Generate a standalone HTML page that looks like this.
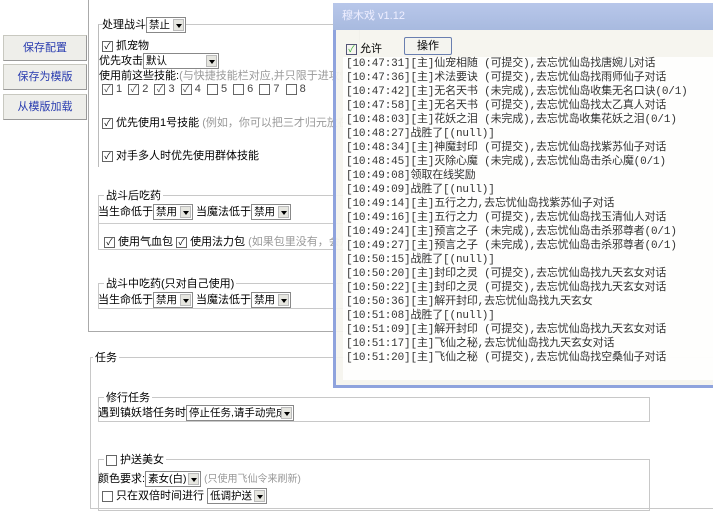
<!DOCTYPE html><html><head><meta charset="utf-8"><style>
body{margin:0;width:713px;height:499px;background:#fff;position:relative;overflow:hidden;font:11px "Liberation Sans","Noto Sans CJK SC",sans-serif;color:#000}
.a{position:absolute;white-space:nowrap}
.btn{position:absolute;left:3px;width:82px;height:24px;background:#eeeeea;border:1px solid #c8c8c0;border-right-color:#999;border-bottom-color:#999;color:#2a3db0;text-align:center;line-height:24px;font-size:11px}
.fs{position:absolute;border:1px solid #c8c8c8}
.sel{display:inline-block;border:1px solid #888;background:#fff;height:14px;line-height:14px;vertical-align:middle;padding-left:2px;position:relative;font-size:10.5px;overflow:hidden}
.sel i{position:absolute;right:1px;top:1px;width:11px;height:12px;background:#e6e6e0;border:1px solid #bbb;box-sizing:border-box}
.sel i:after{content:"";position:absolute;left:2px;top:4px;border:3px solid transparent;border-top:4px solid #000}
.cb{display:inline-block;width:9px;height:9px;border:1px solid #666;vertical-align:middle;margin-right:3px;font-size:9px;line-height:8px;text-align:center}
.g{color:#999}
.win{position:absolute;left:333px;top:3px;width:390px;height:382px;border:3px solid #8fa3dd;border-top:none;background:rgba(245,244,238,0.93)}
.tb{position:absolute;left:-3px;top:0;width:396px;height:27px;background:linear-gradient(#b8c7ea,#a8badf);color:#eef;font-size:11px;line-height:27px;padding-left:9px;box-sizing:border-box}
.log{position:absolute;left:7px;top:54px;width:390px;height:323px;background:rgba(255,255,255,0.85);font:11px "Liberation Mono","Noto Sans CJK SC",monospace;line-height:14px;color:#333;padding-left:3px;box-sizing:border-box;letter-spacing:-0.15px}
</style></head><body>
<div class="a" style="left:88px;top:0;width:1px;height:332px;background:#aaa"></div>
<div class="a" style="left:88px;top:331px;width:260px;height:1px;background:#aaa"></div>
<div class="btn" style="top:35px">保存配置</div>
<div class="btn" style="top:64px">保存为模版</div>
<div class="btn" style="top:94px">从模版加载</div>

<div class="fs" style="left:98px;top:24px;width:260px;height:142px;border-bottom:none;border-left:1px solid #bbb"></div>
<div class="a" style="left:102px;top:16px;background:#fff">处理战斗<span class="sel" style="width:36px">禁止<i></i></span></div>
<div class="a" style="left:102px;top:37px"><span class="cb">✓</span>抓宠物</div>
<div class="a" style="left:99px;top:52px">优先攻击<span class="sel" style="width:72px">默认<i></i></span></div>
<div class="a" style="left:99px;top:67px">使用前这些技能:<span class="g">(与快捷技能栏对应,并只限于进攻性技</span></div>
<div class="a" style="left:102px;top:83px;color:#444"><span class="cb">✓</span>1 &nbsp;<span class="cb">✓</span>2 &nbsp;<span class="cb">✓</span>3 &nbsp;<span class="cb">✓</span>4 &nbsp;<span class="cb"></span>5 &nbsp;<span class="cb"></span>6 &nbsp;<span class="cb"></span>7 &nbsp;<span class="cb"></span>8</div>
<div class="a" style="left:102px;top:114px"><span class="cb">✓</span>优先使用1号技能 <span class="g">(例如，你可以把三才归元放在1</span></div>
<div class="a" style="left:102px;top:147px"><span class="cb">✓</span>对手多人时优先使用群体技能</div>

<div class="fs" style="left:98px;top:195px;width:260px;height:53px;border-right:none"></div>
<div class="a" style="left:104px;top:187px;background:#fff;padding:0 2px">战斗后吃药</div>
<div class="a" style="left:98px;top:203px">当生命低于<span class="sel" style="width:36px">禁用<i></i></span> 当魔法低于<span class="sel" style="width:36px">禁用<i></i></span></div>
<div class="a" style="left:98px;top:223px;width:260px;height:1px;background:#ccc"></div>
<div class="a" style="left:104px;top:233px"><span class="cb">✓</span>使用气血包 <span class="cb">✓</span>使用法力包 <span class="g">(如果包里没有，会从</span></div>
<div class="fs" style="left:98px;top:283px;width:260px;height:24px;border-right:none"></div>
<div class="a" style="left:104px;top:275px;background:#fff;padding:0 2px">战斗中吃药(只对自己使用)</div>
<div class="a" style="left:98px;top:291px">当生命低于<span class="sel" style="width:36px">禁用<i></i></span> 当魔法低于<span class="sel" style="width:36px">禁用<i></i></span></div>

<div class="fs" style="left:90px;top:357px;width:640px;height:150px;border-right:none"></div>
<div class="a" style="left:93px;top:349px;background:#fff;padding:0 2px">任务</div>
<div class="fs" style="left:98px;top:397px;width:550px;height:23px"></div>
<div class="a" style="left:104px;top:389px;background:#fff;padding:0 2px">修行任务</div>
<div class="a" style="left:98px;top:404px">遇到镇妖塔任务时<span class="sel" style="width:104px">停止任务,请手动完成<i></i></span></div>
<div class="fs" style="left:98px;top:459px;width:550px;height:50px"></div>
<div class="a" style="left:104px;top:451px;background:#fff;padding:0 2px"><span class="cb"></span>护送美女</div>
<div class="a" style="left:98px;top:470px">颜色要求:<span class="sel" style="width:52px">素女(白)<i></i></span> <span class="g" style="font-size:10px">(只使用飞仙令来刷新)</span></div>
<div class="a" style="left:102px;top:487px"><span class="cb"></span>只在双倍时间进行 <span class="sel" style="width:56px">低调护送<i></i></span></div>

<div class="win">
<div class="tb">穆木戏 v1.12</div>
<div class="a" style="left:10px;top:37px"><span class="cb" style="color:#3a3;border-color:#557">✓</span>允许</div>
<div class="a" style="left:68px;top:34px;width:46px;height:16px;border:1px solid #6a7fb0;border-radius:2px;background:#f4f4ef;text-align:center;line-height:16px">操作</div>
<div class="log">[10:47:31][主]仙宠相随 (可提交),去忘忧仙岛找唐婉儿对话<br>[10:47:36][主]术法要诀 (可提交),去忘忧仙岛找雨师仙子对话<br>[10:47:42][主]无名天书 (未完成),去忘忧仙岛收集无名口诀(0/1)<br>[10:47:58][主]无名天书 (可提交),去忘忧仙岛找太乙真人对话<br>[10:48:03][主]花妖之泪 (未完成),去忘忧岛收集花妖之泪(0/1)<br>[10:48:27]战胜了[(null)]<br>[10:48:34][主]神魔封印 (可提交),去忘忧仙岛找紫苏仙子对话<br>[10:48:45][主]灭除心魔 (未完成),去忘忧仙岛击杀心魔(0/1)<br>[10:49:08]领取在线奖励<br>[10:49:09]战胜了[(null)]<br>[10:49:14][主]五行之力,去忘忧仙岛找紫苏仙子对话<br>[10:49:16][主]五行之力 (可提交),去忘忧仙岛找玉清仙人对话<br>[10:49:24][主]预言之子 (未完成),去忘忧仙岛击杀邪尊者(0/1)<br>[10:49:27][主]预言之子 (未完成),去忘忧仙岛击杀邪尊者(0/1)<br>[10:50:15]战胜了[(null)]<br>[10:50:20][主]封印之灵 (可提交),去忘忧仙岛找九天玄女对话<br>[10:50:22][主]封印之灵 (可提交),去忘忧仙岛找九天玄女对话<br>[10:50:36][主]解开封印,去忘忧仙岛找九天玄女<br>[10:51:08]战胜了[(null)]<br>[10:51:09][主]解开封印 (可提交),去忘忧仙岛找九天玄女对话<br>[10:51:17][主]飞仙之秘,去忘忧仙岛找九天玄女对话<br>[10:51:20][主]飞仙之秘 (可提交),去忘忧仙岛找空桑仙子对话</div>
</div>
</body></html>
